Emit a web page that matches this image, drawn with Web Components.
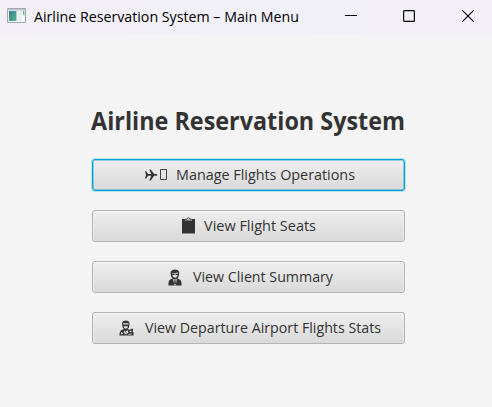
<!DOCTYPE html>
<html lang="en"><head><meta charset="utf-8"><title>Airline Reservation System – Main Menu</title>
<style>html,body{margin:0;height:100%;overflow:hidden;background:#f4f4f4}</style></head>
<body><app-window></app-window>
<script>
const define=(name,html,after)=>customElements.define(name,class extends HTMLElement{
  connectedCallback(){
    if(this.shadowRoot)return;
    const t=document.createElement('template');t.innerHTML=html;
    this.attachShadow({mode:'open'}).append(t.content.cloneNode(true));
    if(after)after(this,this.shadowRoot);
  }
});

// Single-line label set to an exact advance width
define('fit-text',`<style>:host{display:block;flex:none}svg{display:block;overflow:visible}
text{font-family:"Open Sans","Noto Sans",sans-serif;fill:currentColor}</style>
<svg><text x="0"></text></svg>`,(el,r)=>{
  const w=el.getAttribute('w'),s=+el.getAttribute('size'),svg=r.querySelector('svg'),t=r.querySelector('text');
  svg.setAttribute('width',w);svg.setAttribute('height',Math.floor(s));
  t.setAttribute('y',Math.floor(s)*.857);t.setAttribute('textLength',w);t.setAttribute('lengthAdjust','spacingAndGlyphs');
  t.style.fontSize=s+'px';t.style.fontWeight=el.getAttribute('weight')||400;
  t.textContent=el.getAttribute('label');
});

const icons={
plane:`<svg width="23" height="16" viewBox="0 0 23 16"><path fill="#333" d="M0 4.2h1.2l1.8 2.9h3.3L4.3 2.5h1.4l3.5 4.6h1.6q1.5.2 1.7.8-.2.7-1.7.9H9.2l-3.5 4.6H4.3l2-4.6H3l-1.8 2.8H0l1-3.7z"/><path fill="none" stroke="#444" d="M15.5 2.5h6v10h-6z"/></svg>`,
clipboard:`<svg width="13" height="17" viewBox="0 0 13 17"><path fill="#333" d="M0 2h3v2h7V2h3v14.5H0z"/><path fill="#e8e8e8" stroke="#444" d="M3.2 3.2V2.3h1.7q.1-1.5 1.6-1.5t1.6 1.5h1.7v.9z"/></svg>`,
client:`<svg width="14" height="17" viewBox="0 0 14 17"><path fill="#333" d="M3.2 7.7Q2.1 5 2.8 2.6 4 .5 7 .5t4 2.1q.7 2.5-.4 5.1L9.4 9.5l2.7 1.3q1.5.8 1.5 5.7H.4q0-4.9 1.5-5.7l2.7-1.3z"/><path fill="#e3e3e3" d="M4.2 4.1q3.6.6 5.5-.8.5 5.3-2.7 5.4-2.7-.1-2.8-4.6zM5.2 10h3.6l-1 6.3H6.2z"/><path fill="#333" d="M4.2 4.8h2.4v1.3H4.2zm3.2 0h2.4v1.3H7.4zM6.3 10.3h1.4l-.2 1.3.5 3-1 1.4-1-1.4.5-3z"/></svg>`,
pilot:`<svg width="15" height="16" viewBox="0 0 15 16"><path fill="#333" d="M3.2 4.8Q2.6 2 4.5 1 6.8-.2 9.1 1q1.9 1 1.3 3.8L10 7.4 8.7 9l1.4.7 3.6-1.1.5 1.5-.6 1.7 1 .5v3.1H.4q0-3.7 1.4-5l3.1-1.5-1.3-1.6z"/><path fill="#e5e5e5" d="M4.1 3.3h5.4v1.1H4.1zM4.6 6.3h4.5Q8.5 8.6 6.8 8.8 5 8.6 4.6 6.3zM5 10l1.8 1.5L8.6 10l.7 2.8-2 1.7-2.2-1.2zM2 12.3l1.4.2.7 1.6-2.2.1zM10.5 11l2.1-.5v1l-1.7.7zM9.2 14l3.4-.6.3.8-3.4.5z"/><path stroke="#333" stroke-width=".8" d="m5 10.2 3.4 3.6"/></svg>`};

define('menu-button',`<style>:host{display:block;flex:none;width:313px;height:32px}
button{box-sizing:border-box;width:100%;height:100%;padding:0;display:flex;align-items:flex-start;border:1px solid #b4b4b4;border-radius:3px;background:linear-gradient(#eeeeee,#d9d9d9);box-shadow:inset 0 1px #f8f8f8,inset 1px 0 #eaeaea,inset -1px 0 #eaeaea;color:#333;outline:0}
:host([focused]) button{border-color:#039ed3;box-shadow:inset 0 0 0 1px rgba(3,158,211,.4),0 0 0 1px #b8e3f1}
.icon{margin:var(--icon-top,7px) var(--gap,9px) 0 var(--lead)}.icon svg{display:block}fit-text{margin-top:8px}</style>
<button><span class="icon"></span></button>`,(el,r)=>{
  const b=r.querySelector('button');r.querySelector('.icon').innerHTML=icons[el.getAttribute('icon')];
  const t=document.createElement('fit-text');
  t.setAttribute('w',el.getAttribute('w'));t.setAttribute('size','14.7');t.setAttribute('label',el.getAttribute('label'));b.append(t);
});

define('title-bar',`<style>:host{display:flex;box-sizing:border-box;height:35px;padding:0 0 0 7px;background:linear-gradient(90deg,#f4eff7,#f1f0f8 50%,#f3eff7);color:#000}
.app{margin-top:8px;width:19px;height:16px}fit-text{margin:10px 0 0 8px}.controls{display:flex;margin-left:auto;gap:46px;padding:10px 18px 0 0}svg{display:block}.controls svg:last-child{margin-left:1px}</style>
<svg class="app" viewBox="0 0 19 16"><defs><linearGradient id="g" x2="1" y2="1"><stop stop-color="#397fa2"/><stop offset="1" stop-color="#57b880"/></linearGradient></defs><path fill="#f8f8f8" stroke="#a4a8b1" d="M.5.5h18v14H.5z"/><path fill="#bcc2cb" d="M1 1h17v1.5H1z"/><path fill="url(#g)" d="M2 3h7.5v10H2z"/><path fill="#e9eeee" d="M11 3h4v10h-4z"/><path fill="#62af91" d="M16 3h1.4v5.5L16 6z"/></svg>
<fit-text w="265" size="14.7" label="Airline Reservation System – Main Menu"></fit-text>
<div class="controls">
<svg width="12" height="12"><path d="M0 5.5h12" stroke="#000"/></svg>
<svg width="12" height="12"><rect x=".6" y=".6" width="10.8" height="10.8" rx="1" fill="none" stroke="#000" stroke-width="1.2"/></svg>
<svg width="12" height="12"><path d="m.3.3 11.4 11.4M11.7.3.3 11.7" stroke="#000" stroke-width="1.1"/></svg></div>`);

define('app-window',`<style>:host{display:flex;flex-direction:column;height:100vh;background:#f4f4f4;color:#333}
main{display:flex;flex-direction:column;gap:19px;padding:74px 87px 0 92px}.heading{margin:0 0 6px -1px}
</style><title-bar></title-bar><main>
<fit-text class="heading" w="314" size="25" weight="700" label="Airline Reservation System"></fit-text>
<menu-button focused icon="plane" label="Manage Flights Operations" w="179" style="--lead:52px;--gap:8px"></menu-button>
<menu-button icon="clipboard" label="View Flight Seats" w="112" style="--lead:89px;--icon-top:6px"></menu-button>
<menu-button icon="client" label="View Client Summary" w="140" style="--lead:75px;--gap:11px"></menu-button>
<menu-button icon="pilot" label="View Departure Airport Flights Stats" w="236" style="--lead:26px;--gap:11px"></menu-button>
</main>`);
</script></body></html>
